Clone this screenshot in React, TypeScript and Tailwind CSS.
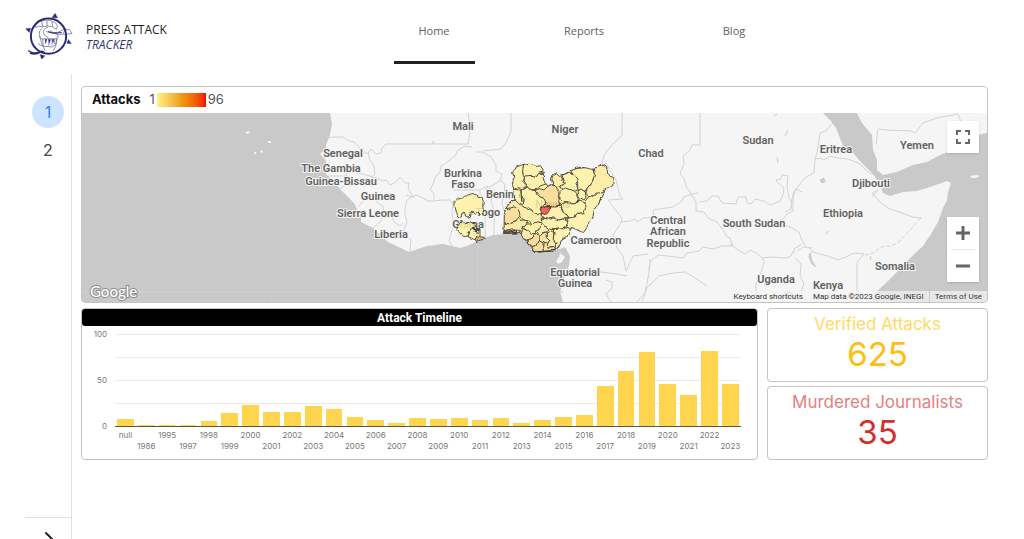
import React from 'react';
import { ChevronRight } from 'lucide-react';

const navItems = [
  { name: 'Home', active: true },
  { name: 'Reports', active: false },
  { name: 'Blog', active: false },
];

const timeline = [
  { year: 'null', attacks: 8 },
  { year: '1986', attacks: 1 },
  { year: '1995', attacks: 1 },
  { year: '1997', attacks: 1 },
  { year: '1998', attacks: 5 },
  { year: '1999', attacks: 14 },
  { year: '2000', attacks: 23 },
  { year: '2001', attacks: 15 },
  { year: '2002', attacks: 15 },
  { year: '2003', attacks: 22 },
  { year: '2004', attacks: 19 },
  { year: '2005', attacks: 10 },
  { year: '2006', attacks: 7 },
  { year: '2007', attacks: 3 },
  { year: '2008', attacks: 9 },
  { year: '2009', attacks: 8 },
  { year: '2010', attacks: 9 },
  { year: '2011', attacks: 6 },
  { year: '2012', attacks: 9 },
  { year: '2013', attacks: 3 },
  { year: '2014', attacks: 6 },
  { year: '2015', attacks: 10 },
  { year: '2016', attacks: 12 },
  { year: '2017', attacks: 44 },
  { year: '2018', attacks: 60 },
  { year: '2019', attacks: 80 },
  { year: '2020', attacks: 46 },
  { year: '2021', attacks: 34 },
  { year: '2022', attacks: 82 },
  { year: '2023', attacks: 46 },
];

const countries = [
  { name: 'Mali', x: 463, y: 130 },
  { name: 'Niger', x: 565, y: 133 },
  { name: 'Chad', x: 651, y: 157 },
  { name: 'Sudan', x: 758, y: 144 },
  { name: 'Eritrea', x: 836, y: 153 },
  { name: 'Yemen', x: 917, y: 149 },
  { name: 'Senegal', x: 343, y: 157 },
  { name: 'The Gambia', x: 331, y: 172 },
  { name: 'Guinea-Bissau', x: 341, y: 185 },
  { name: 'Guinea', x: 378, y: 200 },
  { name: 'Sierra Leone', x: 368, y: 217 },
  { name: 'Liberia', x: 391, y: 238 },
  { name: 'Burkina', x: 463, y: 177 },
  { name: 'Faso', x: 463, y: 188 },
  { name: 'Benin', x: 500, y: 198 },
  { name: 'Togo', x: 488, y: 216 },
  { name: 'Ghana', x: 468, y: 228 },
  { name: 'Nigeria', x: 553, y: 208 },
  { name: 'Cameroon', x: 596, y: 244 },
  { name: 'Equatorial', x: 575, y: 276 },
  { name: 'Guinea', x: 575, y: 287 },
  { name: 'Central', x: 668, y: 224 },
  { name: 'African', x: 668, y: 235 },
  { name: 'Republic', x: 668, y: 247 },
  { name: 'South Sudan', x: 754, y: 227 },
  { name: 'Uganda', x: 776, y: 283 },
  { name: 'Kenya', x: 828, y: 289 },
  { name: 'Djibouti', x: 871, y: 187 },
  { name: 'Ethiopia', x: 843, y: 217 },
  { name: 'Somalia', x: 895, y: 270 },
];

const africa =
  'M330 113L332 124L330 135L326 145L326 149L320 154L325 159L327 165L326 174L335 183L341 190L348 197L354 203L357 209L361 218L361 222L373 228L388 242L409 252L427 246L443 244L460 248L467 246L480 240L493 235L520 233L527 243L535 252L557 250L565 247L570 256L569 266L565 273L563 284L560 292L563 302L869 302L876 292L885 284L897 272L908 260L923 246L931 234L938 222L943 208L947 200L948 192L951 183L947 181L930 187L917 191L903 192L890 196L883 193L880 184L873 174L862 163L852 152L843 146L840 138L836 128L831 121L823 113Z';

const borders = [
  // West Africa
  'M326 138l8-1 9 0 6 4 5 1 5 5 4 4 5 3 3-5 3 3 0 0 2 2 5-1 1-5 4-4 47 0 0-3 1 3 0 0 34 0 2-12-2-24',
  'M368 152l2 8 4 6 1 8-3 3 5 1 6 3 3-1 4 5 6-3 4-5 5 6 4 0-1 6 4 6 2 3',
  'M328 176l18 0 1-5 12 2 14 4M338 190l6-4 10-4M358 207l8-9 8 0 5 6 4 2 1 8 3 1M373 228l8-7 3-7 6-2 4 10 6 4 3-3M410 251l1-11-6-5-1-6 3-7-2-8 0-6 2-8 5-3',
  'M406 195l6 2 4-2 5 2 7 4 6 0 0-8-4-3 3-6 3-8 4-4 1-6 5-3 9-7 3-6 7-4 7 1',
  'M434 201l8-1 8 0 3 4-1 9 2 12-3 8-2 8 4 6M453 190l27 0 0 4 2 2-1 12 4 7 0 14 1 12M480 190l7-4 6 6-2 10 3 8 0 24M485 189l10-5 6-4 4 5-1 8-2 10 2 8',
  'M476 152l6 0 9 5 5 8 0 6 6 3-2 6M483 151l18-2 6-8 4-10 0-18',
  // Chad, Cameroon, Central African Republic
  'M622 113l0 22-10 10-8 10-2 9M605 162l5 8 6 10 4 16 3 3-15 1 6 8 8 10-1 5-8 12 4 13 6 8 3 15 7-15 15-2',
  'M622 222l8-1 5-2 2 3 6-4 11-1-1-7 20-3 8-5 3-5 8-3 6-1M700 113l0 32-8 0-2 5-7 6 1 8-4 10 4 4 2 8 4 6 6 10 0 9 8 1 4 6 9 4 7 9 3 6 3 1 3 8-11 0-9 3-10-2-4 4-12 2-4 5-15-2-10-1-8 7-1 8',
  'M650 259l-1 14-4 20-8 9M642 302l5-14 12-12 14-3 12-1 10 6 12 8M606 280l6 2 0 6-6 6 5 8M567 272l34 0 16 2 10 2',
  // Sudans and the Horn
  'M700 202l7-1 5-5 6 0 4 7 14 1 2-7 8 0 1 6 4 1 4-5 9 2 6 4 10-4 3-6 1-7-7-6-1-2 5-1 1-4 6 1-1 11 2 11 3 4-1 6',
  'M802 192l-6-3-3 5 0 12 0 5-6 3-6 8-1 2 10 3 9 5 2 6 5 9 6 1M730 244l8 6 7 4 5-4 6 3 6 5 9-1 15 1 5-2 3-7 8-5M762 258l2 4-3 10-5 12 0 18',
  'M833 123l-4 4-3 4-6 2-3 20-2 6-1 14-8 4-10 12-4 10-1 10-6 3M815 159l5-1 4 2 6-4 8 2 10 1 12 5 8 8 6 3M872 193l6-3-3 4-3 2M872 193l8 9 8 6 25 9 8 1',
  'M811 251l8 3 9 2 10 4 8-3 8-4 10 1M864 254l-7 8 0 28 0 12M795 258l6 6-1 12 4 8-3 8',
  'M876 144l2-15 8 1 25 1 4 2 8-10 14-5 21-4 3 8',
];

const dashedBorders = ['M921 218l-12 13-10 11-8 4-10 1-8 6-8 2', 'M792 253l6-3 6-3 6 1 2 5'];

// District shapes are drawn on a finer grid than the base map
const nigeria =
  'M230 50L242 46L265 40L281 42L291 48L305 48L311 60L315 75L309 82L314 98L325 108L338 100L335 85L340 74L350 68L358 76L375 72L390 62L405 56L420 52L440 54L455 58L470 55L476 47L490 42L500 50L503 66L509 78L521 86L522 98L515 110L503 116L490 126L484 142L475 165L462 184L458 204L448 216L440 234L430 248L412 240L395 232L388 246L380 262L366 270L358 288L350 300L318 304L285 307L272 292L262 280L252 262L240 248L192 250L193 190L198 174L205 165L216 152L225 150L222 125L217 100L221 84L218 68Z';

const ghana = [
  'M42 155l10-6 14-6 8-8 12 0 10-4 16 0 2 8 12 2 4 14-2 12 2 18-6 8-10-4-8 4-6-6-10 2-2 10-10 4-4-14-8-2-2 14-6 2-8-12-4-18-4-6z',
  'M54 224l12-8 10 6 12-6 8 4 10 2 0 12-10 4-8 6-4 14-12 2-14-12-8-12 4-8z',
  'M90 240l14-6 16 2 0 22-6 12-12-2-18-8z',
];

const districts = [
  { fill: '#fff3a0', d: 'M222 40L252 40L248 66L256 78L248 94L262 108L246 116L232 112L216 122L205 100Z' },
  { fill: '#fff3a0', d: 'M252 40L320 40L325 76L312 66L296 70L290 80L276 76L262 80L250 76L248 60Z' },
  { fill: '#fff0a0', d: 'M262 108L252 92L254 78L276 76L290 80L296 70L318 70L318 102L300 108L292 118L274 120Z' },
  { fill: '#fff3a0', d: 'M244 120L262 108L274 120L290 122L298 136L308 142L318 160L304 172L304 190L292 194L276 182L262 178L250 166L252 146L244 138Z' },
  { fill: '#fbd98a', d: 'M288 122L298 116L312 120L324 108L334 104L348 110L352 122L360 136L356 152L358 166L346 172L330 174L322 168L316 154L308 142L298 136Z' },
  { fill: '#fdeb95', d: 'M335 66L358 66L372 82L368 92L376 100L366 110L350 112L336 104Z' },
  { fill: '#fff3a0', d: 'M366 76L390 66L404 78L412 92L408 104L416 118L404 124L390 118L376 116L364 118L360 108L376 100Z' },
  { fill: '#fff3a0', d: 'M390 58L455 50L464 74L458 92L450 104L440 116L436 124L422 118L414 122L412 92L402 78Z' },
  { fill: '#ffec98', d: 'M458 50L530 36L530 112L488 128L476 134L462 138L446 140L438 130L442 114L458 94L464 74Z' },
  { fill: '#fdf0a0', d: 'M360 122L376 114L390 118L404 124L414 134L418 148L410 160L396 162L384 156L370 158L360 148Z' },
  { fill: '#fff3a0', d: 'M414 122L424 118L436 126L438 142L432 150L422 144L416 136Z' },
  { fill: '#fff3a0', d: 'M495 120L480 150L470 190L440 260L378 230L384 206L404 200L410 190L432 188L438 170L430 160L446 140L470 134Z' },
  { fill: '#fff3a0', d: 'M362 166L384 158L396 162L410 160L420 150L436 160L438 172L430 188L412 190L400 202L386 204L376 194L370 182Z' },
  { fill: '#fff0a0', d: 'M330 174L346 168L360 166L368 182L378 194L386 206L372 206L358 210L340 204L326 208L312 204L304 190L320 192Z' },
  { fill: '#fff3a0', d: 'M306 204L326 208L340 204L358 210L372 206L384 212L378 232L366 240L356 234L340 236L326 234L312 228L304 218Z' },
  { fill: '#fff0a0', d: 'M222 118L242 120L244 138L252 148L250 166L240 168L228 158L220 152L216 140Z' },
  { fill: '#ffe99a', d: 'M198 176L206 160L222 150L232 160L250 168L264 178L278 184L292 194L304 192L304 218L290 216L278 222L268 214L250 210L240 192L234 178L222 172Z' },
  { fill: '#fbda8c', d: 'M190 186L206 180L222 170L234 178L240 192L238 204L230 212L216 216L204 222L190 218Z' },
  { fill: '#fdea98', d: 'M190 218L204 222L216 216L230 212L250 210L262 214L258 226L250 234L246 248L232 240L218 240L190 246Z' },
  { fill: '#ef4f4f', d: 'M192 246L206 242L216 245L228 240L232 250L192 252Z' },
  { fill: '#fff3a0', d: 'M250 234L260 222L274 222L290 216L304 218L304 230L292 240L284 252L272 250L262 242Z' },
  { fill: '#ffe99a', d: 'M244 250L250 236L262 242L272 250L284 252L278 264L264 270L256 270Z' },
  { fill: '#fbd68a', d: 'M262 280L264 270L278 264L284 252L296 258L298 272L290 286L276 290Z' },
  { fill: '#fff0a0', d: 'M304 218L312 228L326 234L322 246L310 248L304 258L296 256L290 246L304 232Z' },
  { fill: '#fbe08e', d: 'M296 258L304 258L310 248L322 246L322 262L330 270L322 282L310 280L298 272Z' },
  { fill: '#ffeb9a', d: 'M322 246L336 240L342 252L340 268L348 278L342 290L324 292L322 282L330 270L322 262Z' },
  { fill: '#fff3a0', d: 'M340 236L356 234L366 240L384 232L392 240L378 266L350 302L342 290L348 278L340 268L342 252Z' },
  { fill: '#fbd68a', d: 'M276 290L290 286L298 272L310 280L308 292L312 306L284 310Z' },
  { fill: '#fbdc8c', d: 'M310 280L322 282L324 292L342 290L348 304L312 308L308 292Z' },
  { fill: '#ee4444', d: 'M305 172L326 169L328 182L320 192L306 191Z' },
];

const Logo = () => (
  <svg viewBox="75 38 147 142" className="w-12 shrink-0" fill="none" stroke="#2b2b73" aria-hidden="true">
    <circle cx="147" cy="109" r="54" strokeWidth="6" />
    <path d="M158 52l9-13 8 14zM77 86l15-1-4 13zM203 131l5-12 9 13zM121 165l15 4-10 11z" fill="#2b2b73" strokeWidth="1" />
    <path d="M85 153c10 9 22 10 37 3 5-2 9-1 13 4M90 161c12 5 24 2 33-3" strokeWidth="4" />
    <g strokeWidth="2.200" opacity="0.75">
      <path d="M108 82c-4-10 0-18 10-21l8 3 3 14M126 64c4-5 12-5 16-1l1 15M143 62c5-3 12-2 15 2l1 14M159 65c8 0 14 6 15 14l-3 9" />
      <path d="M108 82l11-4 10 2 14-2 16 2 12 8M129 83c-10 6-12 18-8 28l8 10M145 82c-12 2-17 14-10 24l12 8" />
      <path d="M140 95l16 4 20-2 22-10M150 92l22 11 28 0 19-2-8-12-16-2M198 87l-6 14M178 112c-2-10-10-14-20-14" />
      <path d="M129 117h44l-4 18-10 7-28-2zM138 118v15M148 118v20M158 118v20M166 118v15M119 108l10 32-14-8M174 110l-5 30-8 14M131 140l5 14" />
    </g>
    <path d="M136 119l3 10 3-10zM147 119l3 12 3-12zM158 119l3 10 3-10z" fill="#2b2b73" strokeWidth="1" />
    <path d="M145 95l18 5 25-2" strokeWidth="3" />
  </svg>
);

const AfricaMap = () => (
  <svg viewBox="82 113 905 189" className="block w-full" role="img" aria-label="Map of attacks">
    <defs>
      <clipPath id="nigeria">
        <path d={nigeria} />
      </clipPath>
      {/* Roughens straight segments so that they read as natural borders */}
      <filter id="rough" x="-5%" y="-5%" width="110%" height="110%" colorInterpolationFilters="sRGB">
        <feTurbulence type="fractalNoise" baseFrequency="0.15" numOctaves="2" seed="4" result="noise" />
        <feDisplacementMap in="SourceGraphic" in2="noise" scale="4" xChannelSelector="R" yChannelSelector="G" />
      </filter>
    </defs>
    <rect x="82" y="113" width="905" height="189" fill="#c9c9c9" />
    <g fill="#f5f5f5">
      <path d={africa} />
      <path d="M857 113l5 10 10 12 1 15 4 10 0 10 6 5 14-3 16-7 14-3 13-7 13-5 14-7 10-8 10-2V113z" />
      <path d="M556 261l3-4 1-4 5 4-3 5-4 2zM970 176l6-1 4 1-4 2-4 0zM245 133l3-2 2 1-2 2zM268 141h3v2h-3zM254 152h2v2h-2zM260 151l2-1 1 2-2 1z" />
    </g>
    <g fill="none" stroke="#d2d2d2" strokeWidth="1" strokeLinejoin="round">
      {borders.map((d) => (
        <path key={d} d={d} />
      ))}
      {dashedBorders.map((d) => (
        <path key={d} d={d} strokeDasharray="4 2" />
      ))}
      <path d="M82 292H563M272 292v10M478 242v50" stroke="#d0d0d0" />
    </g>
    <path
      d="M820 180l4-2 1 4-3 1zM810 253l2 8 4 6-4-3-3-7zM784 293l6-2 4 4-8 4-6-2zM774 116l3-2M777 157l1 6M788 130l-3 6M826 234l2-3M870 260l1-4"
      fill="#cbcbcb"
      stroke="#cbcbcb"
    />
    <g
      fill="#616161"
      stroke="#f5f5f5"
      strokeWidth="2"
      paintOrder="stroke"
      textAnchor="middle"
      className="text-[11px] font-semibold [font-family:Roboto,sans-serif]"
    >
      {countries.map((country) => (
        <text key={`${country.name}-${country.y}`} x={country.x} y={country.y}>
          {country.name}
        </text>
      ))}
    </g>
    <g filter="url(#rough)" opacity="0.82">
      <g transform="translate(440 150) scale(0.3333)" stroke="#2e2c1e" strokeWidth="3" strokeLinejoin="round">
        <g clipPath="url(#nigeria)">
          <path d={nigeria} fill="#fff38f" />
          {districts.map((district) => (
            <path key={district.d} d={district.d} fill={district.fill} />
          ))}
        </g>
        <path d={nigeria} fill="none" />
        {ghana.map((d) => (
          <path key={d} d={d} fill="#fff3a0" />
        ))}
        <path d="M106 268l12-8 14 2 4 4-14 4-14 4z" fill="#e9ae5c" />
        <path
          d="M100 232l18 8-14 2 12 8M195 249l36-1M284 306l66-4M244 136l2 22"
          fill="none"
          stroke="#1d1c14"
          strokeWidth="4"
        />
      </g>
    </g>
    <text
      x="90"
      y="297"
      fill="#ffffff"
      stroke="#8d8d8d"
      strokeWidth="2"
      paintOrder="stroke"
      className="text-[15px] font-medium [font-family:Lato,sans-serif]"
    >
      Google
    </text>
  </svg>
);

const MapCard = () => (
  <section className="overflow-hidden rounded-[4px] border border-[#c4c4c4] bg-white">
    <div className="flex h-[26px] items-center pl-[10px] text-[13px] text-[#555]">
      <h2 className="font-bold text-[#111]">Attacks</h2>
      <span className="ml-[9px]">1</span>
      <div className="mx-[2px] h-[14px] w-[49px] bg-gradient-to-r from-[#fff384] via-[#f09a10] to-[#f20000]"></div>
      <span>96</span>
    </div>
    <div className="relative">
      <AfricaMap />
      <button
        aria-label="Toggle fullscreen view"
        className="absolute right-2 top-2 flex h-8 w-8 items-center justify-center bg-white shadow"
      >
        <svg viewBox="0 0 18 18" className="h-[18px] w-[18px]" fill="#666">
          <path d="M2 2h5v2H4v3H2zM11 2h5v5h-2V4h-3zM2 11h2v3h3v2H2zM14 11h2v5h-5v-2h3z" />
        </svg>
      </button>
      <div className="absolute bottom-5 right-2 flex w-8 flex-col items-center bg-white shadow">
        <button aria-label="Zoom in" className="flex h-8 w-8 items-center justify-center">
          <svg viewBox="0 0 16 16" className="h-4 w-4" fill="#666">
            <path d="M6.500 1h3v5.500H15v3H9.500V15h-3V9.500H1v-3h5.500z" />
          </svg>
        </button>
        <div className="h-px w-6 bg-[#e6e6e6]"></div>
        <button aria-label="Zoom out" className="flex h-8 w-8 items-center justify-center">
          <svg viewBox="0 0 16 16" className="h-4 w-4" fill="#666">
            <path d="M1 6.500h14v3H1z" />
          </svg>
        </button>
      </div>
      <div className="absolute bottom-0 right-0 flex h-[11px] items-center text-[8px] text-[#333] [font-family:Roboto,sans-serif]">
        <button className="bg-[#f5f5f5]/70 px-[5px] leading-[11px]">Keyboard shortcuts</button>
        <span className="bg-[#f5f5f5]/70 px-[5px] leading-[11px]">Map data ©2023 Google, INEGI</span>
        <a href="#terms" className="border-l border-[#ccc] bg-[#f5f5f5]/70 px-[5px] leading-[11px]">
          Terms of Use
        </a>
      </div>
    </div>
  </section>
);

const TimelineCard = () => (
  <section className="min-w-0 flex-1 rounded-[4px] border border-[#c4c4c4] bg-white">
    <h2 className="h-[17px] rounded-[3px] bg-black text-center text-[12px] font-bold leading-[19px] text-white [font-family:Roboto,sans-serif]">
      Attack Timeline
    </h2>
    <div className="flex pb-[7px] pr-4 pt-2 text-[8px] text-[#777]">
      <div className="flex h-[92px] w-[33px] shrink-0 flex-col justify-between pr-2 text-right leading-[0px]">
        <span>100</span>
        <span>50</span>
        <span>0</span>
      </div>
      <div className="min-w-0 flex-1">
        <div className="relative h-[93px] border-b border-[#555]">
          <div className="absolute inset-0 flex flex-col justify-between pb-[22px]">
            {[100, 75, 50, 25].map((tick) => (
              <div key={tick} className="h-px bg-[#ebebeb]"></div>
            ))}
          </div>
          <div className="relative flex h-full items-end">
            {timeline.map((item) => (
              <div key={item.year} className="flex h-full flex-1 items-end justify-center">
                <div className="w-4/5 bg-[#ffd54f]" style={{ height: `${item.attacks}%` }}></div>
              </div>
            ))}
          </div>
        </div>
        <div className="flex">
          {timeline.map((item, index) => (
            <div key={item.year} className={`flex w-0 flex-1 justify-center leading-[11px] ${index % 2 ? 'pt-[14px]' : 'pt-[3px]'}`}>
              <span>{item.year}</span>
            </div>
          ))}
        </div>
      </div>
    </div>
  </section>
);

const App = () => {
  return (
    <div className="flex h-screen flex-col overflow-hidden bg-white [font-family:Inter,'Open_Sans',sans-serif]">
      <header className="flex h-[74px] shrink-0 items-start pl-[25px] [font-family:'Open_Sans',sans-serif]">
        <a href="#home" className="flex w-[334px] items-start pt-[13px]">
          <Logo />
          <span className="ml-[13px] pt-[9px] text-[12px] leading-[15px]">
            <span className="block text-[#222]">PRESS ATTACK</span>
            <span className="block italic text-[#34346e]">TRACKER</span>
          </span>
        </a>
        <nav className="flex">
          {navItems.map((item) => (
            <a
              key={item.name}
              href={`#${item.name.toLowerCase()}`}
              className="flex h-16 w-[150px] flex-col items-center justify-between pt-[22px] text-[11px] leading-[18px] text-[#605e5c]"
            >
              {item.name}
              {item.active && <span className="h-[3px] w-[81px] bg-[#212121]"></span>}
            </a>
          ))}
        </nav>
      </header>

      <div className="flex min-h-0 flex-1">
        <aside className="ml-[25px] flex w-[47px] shrink-0 flex-col justify-between border-r border-[#e1e1e1]">
          <div className="flex flex-col items-center gap-[6px] pt-[22px] text-[16px] text-[#444]">
            <button className="h-8 w-8 rounded-full bg-[#cce4ff] text-[#2684ff]">1</button>
            <button className="h-8 w-8 rounded-full">2</button>
          </div>
          <div className="h-[22px] border-t border-[#e1e1e1] pt-[9px]">
            <button aria-label="Expand pages" className="ml-3 block text-[#222]">
              <ChevronRight size={24} />
            </button>
          </div>
        </aside>

        <main className="min-w-0 flex-1 pl-[9px] pr-9 pt-3">
          <MapCard />
          <div className="mt-[5px] flex gap-[9px]">
            <TimelineCard />
            <div className="flex w-[221px] shrink-0 flex-col gap-1 text-center">
              <section className="flex-1 rounded-[4px] border border-[#c4c4c4] pt-[5px]">
                <h3 className="text-[17px] leading-5 text-[#ffd966]">Verified Attacks</h3>
                <p className="text-[33px] leading-10 text-[#fcbf10]">625</p>
              </section>
              <section className="flex-1 rounded-[4px] border border-[#c4c4c4] pt-[5px]">
                <h3 className="text-[17px] leading-5 text-[#e57f7f]">Murdered Journalists</h3>
                <p className="text-[33px] leading-10 text-[#d32f2f]">35</p>
              </section>
            </div>
          </div>
        </main>
      </div>
    </div>
  );
};

export default App;
